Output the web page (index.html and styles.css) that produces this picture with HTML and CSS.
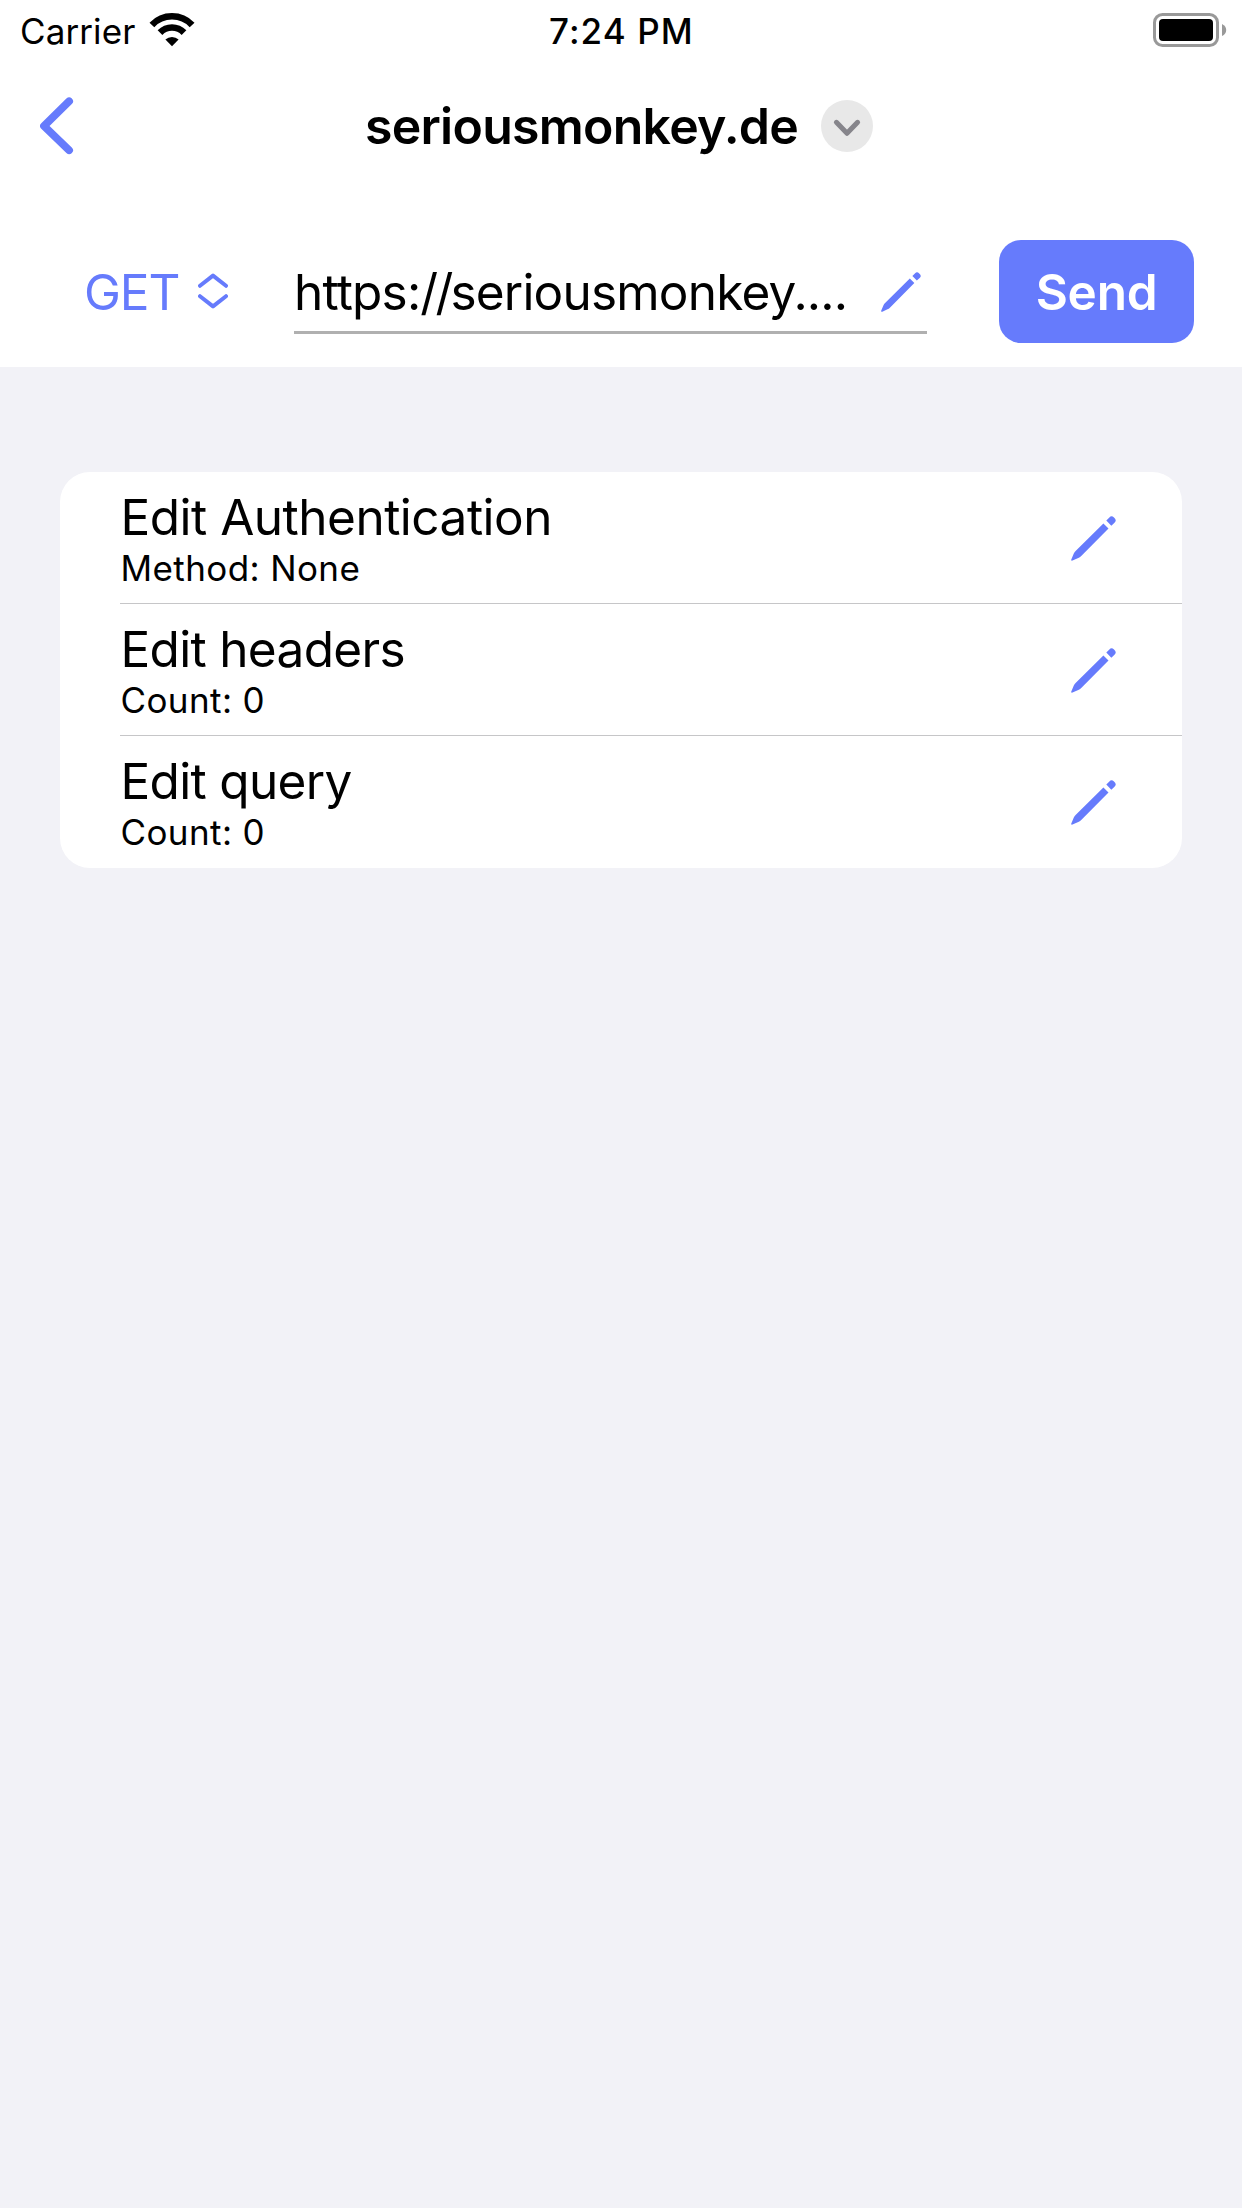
FILE: index.html
```html
<!DOCTYPE html>
<html lang="en">
<head>
<meta charset="utf-8">
<title>seriousmonkey.de</title>
<link rel="stylesheet" href="styles.css">
</head>
<body>
<svg class="defs" aria-hidden="true">
  <symbol id="pencil" viewBox="0 0 45 45">
    <path d="M32.4 7.4 37.5 12.5 10 40.2Q8.800 41.400 7.300 42L1.500 44.600Q-.2 45.100.3 43.400L2.800 37.400Q3.400 35.900 4.600 34.900Z"/>
    <path d="M35.300 4.600 38.400 1.500Q40.400-.8 43 1.600 46.200 4.500 43.500 6.700L40.300 9.700Z"/>
  </symbol>
</svg>
<header class="top">
  <div class="status">
    <div class="status-left">
      <span class="carrier">Carrier</span>
      <svg class="wifi" viewBox="149 12 46 35">
        <g fill="none" stroke="#000" stroke-width="6.600">
          <path d="M151.900 24.900A27.700 27.700 0 0 1 192.100 24.900"/>
          <path d="M160 32.600A16.800 16.800 0 0 1 184 32.600"/>
        </g>
        <path d="M165.400 39.600A9.500 9.500 0 0 1 178.600 39.600L172 46.200Z"/>
      </svg>
    </div>
    <span class="time">7:24 PM</span>
    <svg class="battery" viewBox="1153 13 74 34">
      <rect x="1154.500" y="14.500" width="63" height="31" rx="8" fill="none" stroke="#999" stroke-width="3"/>
      <rect x="1159" y="19" width="54" height="22" rx="4"/>
      <path d="M1222 24Q1226.200 26 1226.200 30T1222 36Z" fill="#999"/>
    </svg>
  </div>
  <nav class="navbar">
    <svg class="back" viewBox="0 0 34 58"><path d="M29.100 4.300 4 29 29.100 53.200"/></svg>
    <h1 class="title">seriousmonkey.de</h1>
    <svg class="more" viewBox="0 0 52 52"><circle cx="26" cy="26" r="26"/><path d="M15.400 22.300 26 33.300 36.600 22.300"/></svg>
  </nav>
  <div class="request">
    <div class="method">
      <span>GET</span>
      <svg class="updown" viewBox="0 0 30 36"><path d="M2 12.800 15 2.600 28 12.800M2 23.200 15 33.400 28 23.200"/></svg>
    </div>
    <div class="url">
      <span class="url-text">https:<span class="slashes">//</span>seriousmonkey....</span>
      <svg class="pencil pencil-small"><use href="#pencil"/></svg>
    </div>
    <button class="send">Send</button>
  </div>
</header>
<main>
  <ul class="card">
    <li class="row">
      <div class="row-body">
        <div><div class="label auth">Edit Authentication</div><div class="detail">Method: None</div></div>
        <svg class="pencil"><use href="#pencil"/></svg>
      </div>
    </li>
    <li class="row">
      <div class="row-body">
        <div><div class="label">Edit headers</div><div class="detail">Count: 0</div></div>
        <svg class="pencil"><use href="#pencil"/></svg>
      </div>
    </li>
    <li class="row">
      <div class="row-body">
        <div><div class="label">Edit query</div><div class="detail">Count: 0</div></div>
        <svg class="pencil"><use href="#pencil"/></svg>
      </div>
    </li>
  </ul>
</main>
</body>
</html>
```
FILE: styles.css
```css
* { box-sizing: border-box; }
body {
  margin: 0;
  min-height: 2208px;
  background: #f2f2f7;
  color: #000;
  font-family: Inter, "Liberation Sans", sans-serif;
  font-size: 49.5px;
  line-height: 60px;
  white-space: nowrap;
}
svg { display: block; flex: none; }
.defs { display: none; }
.top { height: 367px; background: #fff; }

.status {
  display: grid;
  grid-template-columns: 549px 1fr auto;
  height: 62px;
  padding-right: 15px;
  font-size: 35px;
}
.status-left { display: flex; padding-left: 20px; }
.carrier { width: 129px; line-height: 62px; letter-spacing: 0.1px; }
.wifi { width: 46px; height: 35px; margin-top: 12px; }
.time { line-height: 62px; font-weight: 500; letter-spacing: 1.08px; }
.battery { width: 74px; height: 34px; margin-top: 13px; }

.navbar {
  display: flex;
  align-items: center;
  height: 128px;
  padding-left: 40px;
}
.back { width: 34px; height: 58px; }
.back path { fill: none; stroke: #667bfc; stroke-width: 7.8; stroke-linecap: round; stroke-linejoin: round; }
.title {
  width: 456px;
  margin: 0 0 0 291px;
  font-size: 50px;
  font-weight: 600;
  letter-spacing: -0.75px;
}
.more { width: 52px; height: 52px; }
.more circle { fill: #e8e8e8; }
.more path { fill: none; stroke: #86858b; stroke-width: 5; stroke-linecap: round; stroke-linejoin: round; }

.request {
  display: flex;
  align-items: center;
  height: 177px;
  padding: 50px 48px 24px 84px;
}
.method {
  display: flex;
  justify-content: space-between;
  align-items: center;
  width: 144px;
  color: #667bfc;
  letter-spacing: -1.1px;
}
.updown { width: 30px; height: 36px; margin-top: -1px; }
.updown path { fill: none; stroke: #667bfc; stroke-width: 4; stroke-linecap: round; stroke-linejoin: round; }
.url {
  display: flex;
  justify-content: space-between;
  align-items: center;
  width: 633px;
  height: 85px;
  margin: 0 72px 0 66px;
  padding: 3px 6px 0 0;
  border-bottom: 3px solid #b0b0b0;
}
.url-text { letter-spacing: -0.8px; }
.slashes { letter-spacing: -2.8px; }
.send {
  flex: 1;
  height: 103px;
  padding: 0;
  border: 0;
  border-radius: 22px;
  background: #667bfc;
  color: #fff;
  font: 600 49.5px/60px Inter, "Liberation Sans", sans-serif;
  letter-spacing: -0.25px;
}

.pencil { width: 45px; height: 45px; fill: #667bfc; }
.pencil-small { width: 40px; height: 40px; }

main { padding: 105px 60px; }
.card {
  margin: 0;
  padding: 0 0 0 60px;
  list-style: none;
  background: #fff;
  border-radius: 30px;
}
.row { height: 132px; }
.row:not(:last-child) { border-bottom: 1px solid #c6c6c8; }
.row-body {
  display: flex;
  justify-content: space-between;
  padding: 17px 66px 0 0.5px;
}
.row .pencil { margin-top: 27px; }
.label { line-height: 56px; letter-spacing: -0.68px; }
.auth { letter-spacing: -0.5px; }
.detail { font-size: 35px; line-height: 46px; letter-spacing: 0.4px; }
```
